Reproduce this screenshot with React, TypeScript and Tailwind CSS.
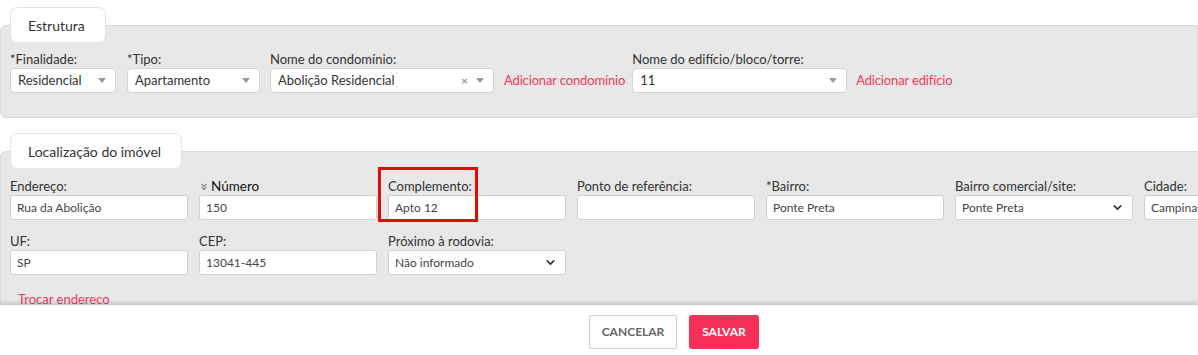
import { ChevronDown, ChevronsDown } from "lucide-react";

const Caret = () => (
  <span className="ml-auto w-0 h-0 border-l-[4px] border-r-[4px] border-t-[5px] border-l-transparent border-r-transparent border-t-[#999]" />
);

const FakeSelect = ({ value, w, clear }: { value: string; w: string; clear?: boolean }) => (
  <div className={`${w} h-[25px] flex items-center bg-white border border-[#d3d3d3] rounded-[4px] pl-[7px] pr-[9px] text-[13px] text-[#333]`}>
    <span>{value}</span>
    {clear && <span className="ml-auto mr-[8px] text-[12px] font-bold text-[#999] leading-none">×</span>}
    {clear ? <span className="w-0 h-0 border-l-[4px] border-r-[4px] border-t-[5px] border-l-transparent border-r-transparent border-t-[#999]" /> : <Caret />}
  </div>
);

const Field = ({ label, value, select }: { label: React.ReactNode; value?: string; select?: boolean }) => (
  <div className="w-[178px] shrink-0 flex flex-col">
    <div className="h-[16px] text-[13px] leading-[15px] text-[#333] whitespace-nowrap">{label}</div>
    <div className="h-[25px] flex items-center bg-white border border-[#d0d0d0] rounded-[3px] pl-[6px] pr-[8px] text-[12px] text-[#444] whitespace-nowrap overflow-hidden">
      <span>{value}</span>
      {select && <ChevronDown className="ml-auto text-[#333]" size={13} strokeWidth={3} />}
    </div>
  </div>
);

const Tab = ({ children, w }: { children: React.ReactNode; w: string }) => (
  <div className={`${w} relative z-10 ml-[10px] h-[35px] bg-white rounded-[7px] border border-[#e4e4e4] border-b-0 flex items-center pl-[17px] text-[14px] text-[#333]`}>
    {children}
  </div>
);

export default function App() {
  return (
    <div className="w-[1198px] h-[355px] overflow-hidden bg-white relative" style={{ fontFamily: "Lato, 'Open Sans', sans-serif" }}>
      {/* Estrutura */}
      <div className="pt-[7px]">
        <Tab w="w-[96px]">Estrutura</Tab>
        <div className="mt-[-17px] h-[93px] bg-[#e8e8e8] border border-[#dadada] rounded-l-[6px] pt-[26px] pl-[9px] flex items-start gap-[10px]">
          <div className="flex flex-col">
            <div className="h-[16px] text-[13px] leading-[15px] text-[#333]">*Finalidade:</div>
            <FakeSelect value="Residencial" w="w-[106px]" />
          </div>
          <div className="flex flex-col ml-[1px]">
            <div className="h-[16px] text-[13px] leading-[15px] text-[#333]">*Tipo:</div>
            <FakeSelect value="Apartamento" w="w-[133px]" />
          </div>
          <div className="flex flex-col">
            <div className="h-[16px] text-[13px] leading-[15px] text-[#333]">Nome do condomínio:</div>
            <FakeSelect value="Abolição Residencial" w="w-[224px]" clear />
          </div>
          <div className="mt-[19px] text-[13px] tracking-[-0.15px] text-[#f2395f] whitespace-nowrap">Adicionar condomínio</div>
          <div className="flex flex-col ml-[-3px]">
            <div className="h-[16px] text-[13px] leading-[15px] text-[#333]">Nome do edifício/bloco/torre:</div>
            <FakeSelect value="11" w="w-[215px]" />
          </div>
          <div className="mt-[19px] ml-[-1px] text-[13px] tracking-[-0.15px] text-[#f2395f] whitespace-nowrap">Adicionar edifício</div>
        </div>
      </div>

      {/* Localização */}
      <div className="pt-[15px]">
        <Tab w="w-[172px]">Localização do imóvel</Tab>
        <div className="mt-[-17px] h-[200px] bg-[#e8e8e8] border border-[#dadada] border-r-0 rounded-l-[6px] pt-[27px] pl-[9px]">
          <div className="flex gap-[11px]">
            <Field label="Endereço:" value="Rua da Abolição" />
            <Field
              label={
                <span className="flex items-center gap-[2px] text-[13.5px] text-[#111]">
                  <ChevronsDown size={10} strokeWidth={3} className="text-[#888]" />
                  Número
                </span>
              }
              value="150"
            />
            <div className="relative">
              <Field label="Complemento:" value="Apto 12" />
              <div className="absolute left-[-10px] top-[-12px] w-[100px] h-[55px] border-[3px] border-[#e40a0a]" />
            </div>
            <Field label="Ponto de referência:" value="" />
            <Field label="*Bairro:" value="Ponte Preta" />
            <Field label="Bairro comercial/site:" value="Ponte Preta" select />
            <Field label="Cidade:" value="Campinas" />
          </div>
          <div className="flex gap-[11px] mt-[14px]">
            <Field label="UF:" value="SP" />
            <Field label="CEP:" value="13041-445" />
            <Field label="Próximo à rodovia:" value="Não informado" select />
          </div>
          <div className="mt-[15px] ml-[8px] text-[13px] text-[#f2395f]">Trocar endereco</div>
        </div>
      </div>

      {/* Footer */}
      <div className="absolute left-0 right-0 bottom-0 h-[50px] bg-white shadow-[0_-2px_4px_rgba(0,0,0,0.18)] flex items-start pt-[10px] pl-[589px] gap-[12px]">
        <button className="w-[88px] h-[34px] border border-[#cfcfcf] rounded-[2px] bg-white text-[12px] font-bold text-[#666]">CANCELAR</button>
        <button className="w-[70px] h-[34px] rounded-[3px] bg-[#f52f57] text-[12px] font-bold text-white">SALVAR</button>
      </div>
    </div>
  );
}
